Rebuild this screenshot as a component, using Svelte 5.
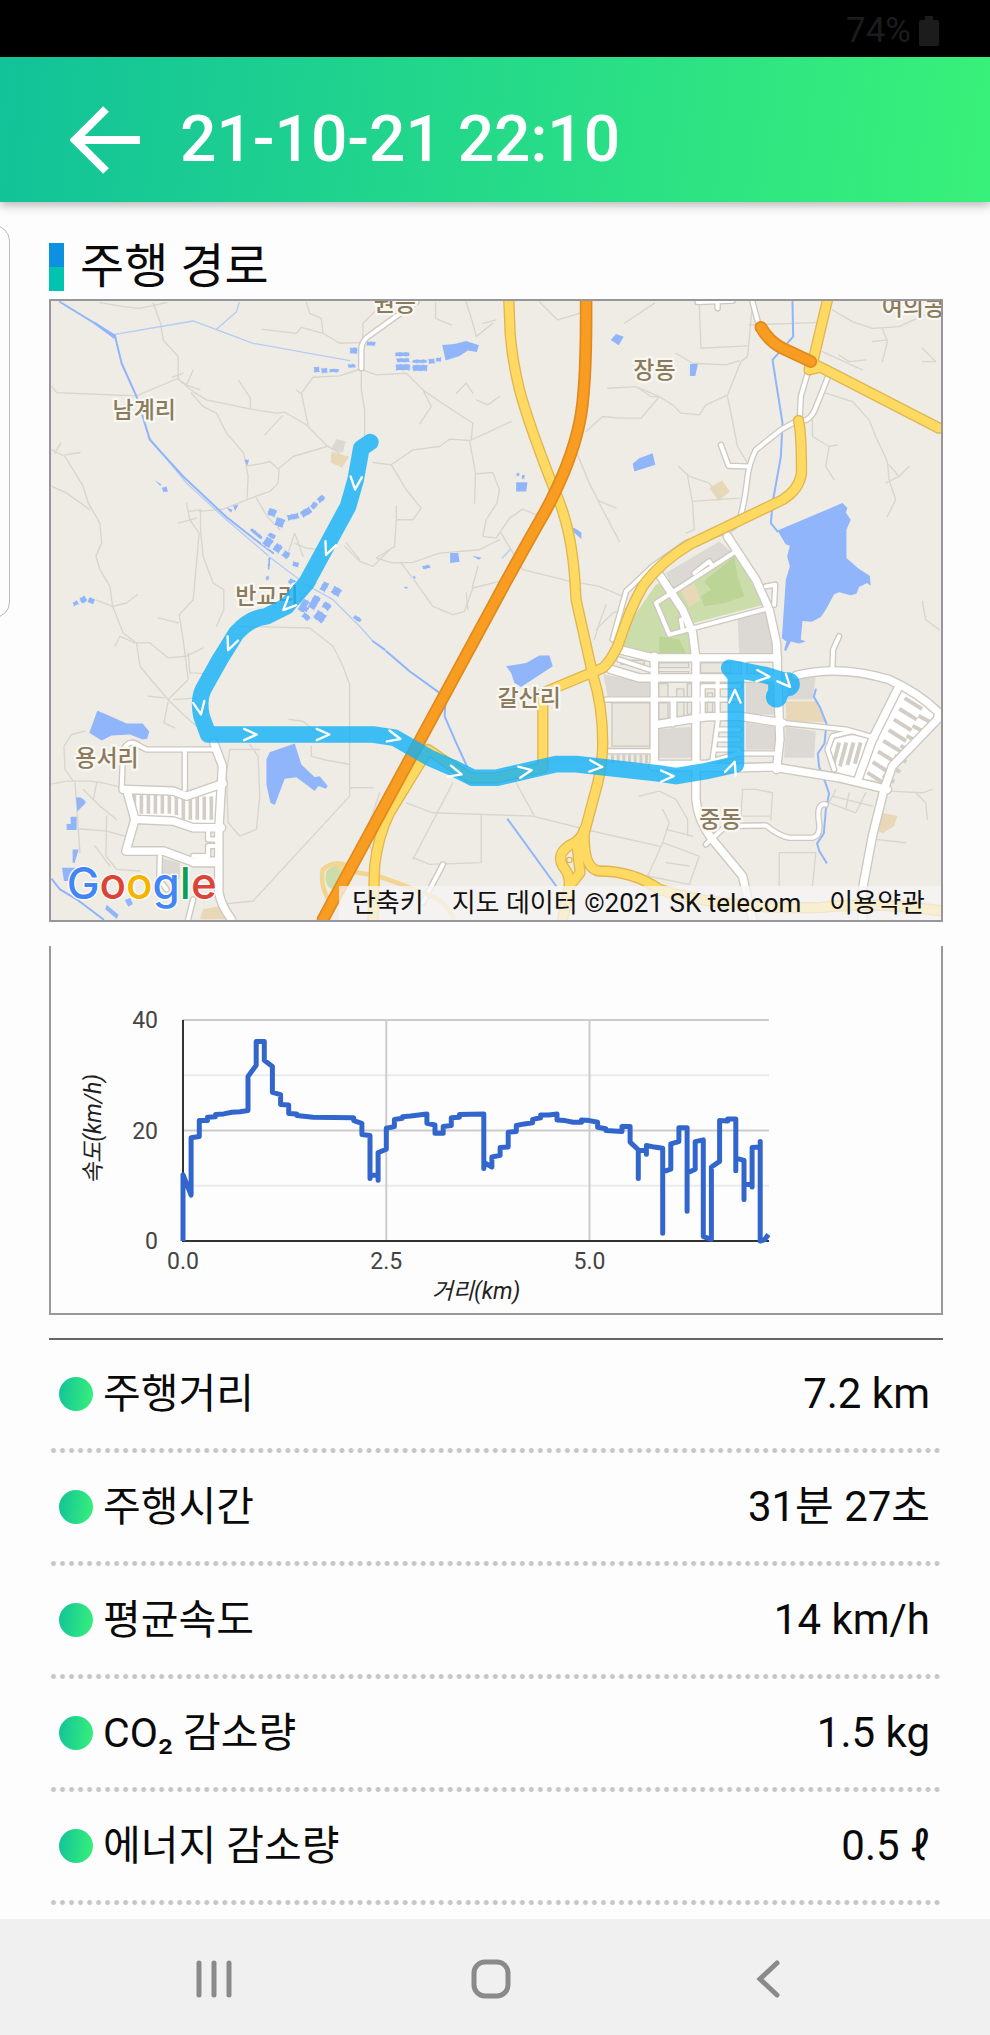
<script lang="ts">
  interface Stat {
    label: string;
    value: string;
  }

  const title = "21-10-21 22:10";

  const stats: Stat[] = [
    { label: "주행거리", value: "7.2 km" },
    { label: "주행시간", value: "31분 27초" },
    { label: "평균속도", value: "14 km/h" },
    { label: "CO₂ 감소량", value: "1.5 kg" },
    { label: "에너지 감소량", value: "0.5 ℓ" },
  ];

  // [distance km, speed km/h]
  const speedLog = [
    [0, 0], [0, 12], [0.1, 8.3], [0.1, 18.7], [0.2, 18.9], [0.2, 21.8], [0.3, 21.8],
    [0.3, 22.4], [0.4, 22.5], [0.4, 22.9], [0.5, 23], [0.6, 23.3], [0.7, 23.4], [0.8, 23.6],
    [0.8, 29.8], [0.9, 31.8], [0.9, 36.1], [1, 36.1], [1, 32.7], [1.1, 31.6], [1.1, 26.9],
    [1.2, 26.5], [1.2, 24.7], [1.3, 24.6], [1.3, 23.1], [1.4, 23], [1.4, 22.7], [1.6, 22.4],
    [2.1, 22.3], [2.1, 21.8], [2.2, 21.3], [2.2, 19.3], [2.3, 19.1], [2.3, 11.3], [2.3, 11.9],
    [2.4, 11.9], [2.4, 11], [2.4, 16], [2.5, 16.6], [2.5, 20.4], [2.6, 20.7], [2.6, 22],
    [2.7, 22.2], [2.7, 22.5], [2.8, 22.6], [2.9, 22.8], [3, 23], [3, 21.3], [3.1, 21],
    [3.1, 19.5], [3.2, 19.5], [3.2, 20.7], [3.3, 20.9], [3.3, 22.3], [3.4, 22.4], [3.4, 22.9],
    [3.7, 23], [3.7, 13.1], [3.7, 14.2], [3.8, 13.4], [3.8, 15.2], [3.9, 15.5], [3.9, 16.9],
    [4, 17], [4, 19.7], [4.1, 19.8], [4.1, 20.9], [4.2, 21.2], [4.3, 21.4], [4.3, 22],
    [4.4, 22.3], [4.4, 22.8], [4.5, 22.8], [4.6, 23], [4.6, 21.9], [4.7, 21.8], [4.8, 21.5],
    [4.9, 21.5], [4.9, 21.9], [5, 21.8], [5.1, 21.5], [5.1, 20.6], [5.2, 20.3], [5.2, 20],
    [5.4, 19.8], [5.4, 20.7], [5.5, 20.7], [5.5, 17.9], [5.6, 16.5], [5.6, 11.3], [5.6, 16.4],
    [5.7, 16.4], [5.7, 15.7], [5.7, 17.3], [5.8, 17], [5.9, 16.8], [5.9, 1.4], [5.9, 12.5],
    [6, 13], [6, 17.6], [6.1, 18], [6.1, 20.5], [6.2, 20.5], [6.2, 5.4], [6.2, 12.3],
    [6.3, 13], [6.3, 18], [6.4, 18.3], [6.4, 0.8], [6.5, 0.3], [6.5, 13.4], [6.6, 14.4],
    [6.6, 21.8], [6.7, 21.7], [6.7, 22.1], [6.8, 22.1], [6.8, 12.7], [6.8, 15], [6.9, 14.6],
    [6.9, 7.5], [6.9, 10.2], [7, 10.2], [7, 9.8], [7, 16.9], [7.1, 17], [7.1, 18], [7.1, 0],
    [7.15, 0.2], [7.2, 1.2],
  ];

  const plot = { left: 132, right: 718, top: 74, bottom: 295 };
  const xOf = (km: number) => plot.left + km * 81.3;
  const yOf = (speed: number) => plot.bottom - (speed * (plot.bottom - plot.top)) / 40;
  const speedLine = speedLog.map(([km, v]) => `${xOf(km).toFixed(1)},${yOf(v).toFixed(1)}`).join(" ");

  // map layers, drawn bottom up
  const water = [
    "M2410 640 2425 655 2420 668 2435 690 2422 720 2422 805 2460 838 2492 858 2495 888 2484 880 2460 892 2452 912 2435 917 2400 908 2385 914 2360 960 2345 982 2318 996 2290 994 2285 1050 2300 1056 2280 1062 2255 1056 2240 1086 2235 1080 2242 1056 2228 1046 2236 930 2240 870 2252 830 2244 800 2252 768 2240 764 2215 722Z",
    "M1400 1130 1460 1120 1500 1098 1530 1098 1540 1130 1445 1192 1425 1180 1415 1150Z",
    "M172 1264 200 1275 260 1302 308 1302 328 1326 322 1348 308 1350 270 1335 215 1338 185 1353 148 1330Z",
    "M690 1388 765 1362 785 1425 825 1463 840 1460 864 1490 858 1498 836 1490 825 1505 770 1463 735 1468 705 1547 692 1540 680 1485 680 1410Z",
    "M1208 165 1245 162 1280 153 1318 166 1312 186 1285 182 1260 198 1218 212Z",
    "M1780 522 1800 505 1840 490 1848 525 1785 545Z",
    "M1714 150 1730 132 1753 140 1738 166Z",
    "M1232 790h24l4 26-28 4Z",
    "M1430 577h34l-4 28h-30Z",
    "M1594 720l10-6 22 14v20Z",
    "M1952 222h24l-8 36h-16Z",
    "M108 1524q20-4 30 16l-26 26Z",
    "M92 1582h18v40h-30v-18h12Z",
    "M98 1680h18l-12 40h-6Z",
    "M66 1735h40v40h-34Z",
    "M200 1846l36 30-6 12-34-28Z",
    "M255 1832l16-6 8 18-14 8Z",
    "M165 95l62 42-4 10-62-46Z",
    "M366 594l14-4 4 16h-14Z",
    "M345 572l20 12-4 4Z",
    "M560 655l18 4-4 10ZM580 648l16-4-10 20Z",
    "M614 510h14l-6 18Z",
    "M1298 798l28 6-8 6Z",
  ];
  // fish ponds and paddies: x, y, w, h, angle
  const paddies = [
    [1066, 186, 44, 14, 0], [1070, 204, 40, 14, 0], [1068, 222, 44, 20, 0], [1118, 208, 44, 12, 0],
    [1118, 224, 46, 20, 0], [1166, 206, 20, 16, 0], [1188, 202, 18, 14, 0], [930, 172, 24, 20, 0],
    [980, 154, 28, 14, 0], [924, 222, 24, 12, 0], [822, 230, 18, 18, 0], [844, 234, 20, 16, 0],
    [868, 236, 30, 12, 0], [684, 656, 26, 24, 20], [706, 684, 28, 28, 20], [742, 672, 36, 18, -10],
    [782, 656, 34, 22, -30], [812, 638, 22, 18, -50], [832, 618, 24, 18, -40], [628, 726, 44, 12, 40],
    [672, 742, 26, 30, 35], [702, 762, 24, 26, 35], [728, 784, 22, 22, 35], [684, 730, 24, 16, 30],
    [758, 816, 20, 16, 20], [684, 800, 8, 40, 5], [678, 858, 10, 14, 0], [746, 868, 22, 18, 30],
    [780, 930, 30, 40, 30], [812, 916, 24, 44, 30], [844, 876, 20, 30, 30], [876, 892, 28, 26, 30],
    [824, 966, 34, 30, 35], [848, 938, 26, 22, 35], [786, 972, 26, 18, 40], [940, 980, 26, 14, 35],
    [98, 934, 18, 14, -25], [120, 920, 20, 20, -25], [144, 924, 20, 18, 30], [1430, 548, 10, 12, 0],
    [1446, 554, 10, 14, 0], [1148, 826, 24, 12, -10], [1120, 858, 8, 10, 0], [1094, 890, 10, 8, 0],
  ];
  const rivers = [
    "M60 36 225 137 245 220 290 320 330 450 430 560 560 682 640 745 700 790",
    "M1000 1055 1035 1080M1040 1085 1110 1145 1200 1210 1218 1230 1215 1280 1250 1360 1282 1430",
    "M1405 1590 1550 1790",
    "M2260 36 2262 140 2200 210 2230 400 2225 500 2200 640 2195 700 2215 725",
    "M2330 1200l-6 22 18 30 20 50-6 60-20 30 4 40 16 40 14 40-10 50-6 70-20 30 6 22 22 36",
    "M36 1770 60 1800 110 1830 190 1890",
  ];
  const streams = [
    "M225 133 460 93 640 160 930 212",
    "M530 118 590 65 598 38",
    "M790 880 880 930 960 1010 1000 1055",
    "M325 440 440 580 560 690 700 810 780 870",
    "M1388 805 1412 780",
  ];
  const lanes = [
    "M180 38 250 50 300 55 380 38M340 40 362 100 370 150 415 200 415 265 290 318",
    "M36 290 50 308 240 316 290 318M415 268 460 305 500 330 630 357 710 370 735 367 800 405 862 468 900 490",
    "M415 268 440 285 480 300M440 285 460 240M398 262 430 250M455 310 490 350 530 370 560 430 612 490 625 560 622 625",
    "M597 272 632 325 632 355M675 435 728 378M622 528 660 522 690 515 718 540 715 580 690 605 620 630 550 658 480 665",
    "M718 535 760 500 862 470M650 625 682 680 720 720M440 640 450 690 478 730 470 820 460 930",
    "M482 660 482 720 490 800 520 880 552 900 552 960 530 1010M415 700 470 685M445 665 482 660",
    "M668 118 770 130 785 112 850 130 900 160 960 158M800 38 810 70 845 85 850 130",
    "M805 405 785 310 820 262 900 258 960 238M770 300 788 315",
    "M36 480 75 500 130 590 145 640 180 700 185 760 168 800 180 840 210 890 218 950 250 1030 290 1060 300 1130 350 1190 385 1230 430 1275 470 1310",
    "M36 590 80 610 150 660M75 495 120 488M45 490 62 460M165 930 218 950 260 940 292 915",
    "M285 1060 240 1040 225 1070M290 1060 330 1060 385 1105 440 1100 490 1075M355 985 415 1000M460 930 418 975 430 1050 445 1170 385 1230",
    "M385 1235 372 1300 405 1315M325 1220 375 1225M400 1230 470 1225M445 1090 450 1150 500 1152",
    "M765 760 800 775 850 780M790 800 765 730 745 790M920 760 960 810M780 930 830 880",
    "M600 1010 810 1015 880 1070 910 1130 930 1185 930 1520 640 1835 540 1845M930 1495 1000 1495",
    "M748 1290 790 1295 830 1330M930 1425 850 1410 815 1400 815 1370",
    "M660 1380 640 1380 570 1380 560 1450 565 1600 600 1640 650 1620 660 1520 655 1400 630 1365",
    "M36 1483 80 1475 150 1475 190 1480 250 1495M135 1325 95 1335 72 1370 75 1440 100 1475M105 1475 120 1690M130 1500 180 1550 230 1590",
    "M115 1618 200 1625 255 1640M200 1580 198 1700 230 1740 300 1745M165 1670 210 1730M170 1480 160 1530",
    "M965 240 965 300 975 360 975 440M965 238 1010 255 1100 250 1150 300 1175 350 1140 402M1150 300 1200 335 1300 400 1295 450",
    "M1000 518 1055 525 1120 480 1200 470 1230 448 1290 452 1340 430 1415 395M1290 452 1308 550 1305 640",
    "M1310 552 1360 548 1380 600 1372 640 1340 690 1330 740 1370 745 1410 685 1450 658 1490 675 1530 635",
    "M1055 525 1100 600 1145 655 1120 690 1070 690 1070 650M1070 690 1065 770 1010 805 1060 820 1120 818 1200 790 1320 780 1380 750",
    "M915 770 960 815 1000 830 1050 780M1085 820 1130 880 1180 950 1240 975 1275 965 1300 895 1380 875M1385 730 1450 840 1580 872 1680 890 1750 920",
    "M1280 36 1300 100 1310 140 1360 100M1188 38 1188 85 1235 105M1330 100 1370 90",
    "M970 158 970 100 1010 60M1250 310 1280 280 1300 310M1310 330 1345 345 1380 320M1298 895 1315 830M1285 960 1280 910",
    "M1500 36 1555 90 1620 70M1755 100 1845 40M1705 295 1790 290 1835 320 1860 320 1805 385 1740 385 1690 380 1640 425",
    "M1610 485 1650 580 1690 660 1740 755M1675 632 1730 655M1860 320 1900 345 1925 370 1980 375 2000 345 2065 315 2105 215 2125 200 2140 40M2130 105 2330 98",
    "M1980 38 1985 175 2125 168M1910 190 1960 220 2060 225 2100 212M2065 320 2095 470 2125 520M1800 295 1860 320",
    "M1918 530 1950 560 2010 580 2040 620M1945 560 1960 640 1965 720 1940 730M1960 635 2100 625",
    "M2380 60 2440 95 2500 115 2580 110 2700 55M2530 115 2545 155 2530 215M2500 155 2545 150M2350 185 2470 240M2400 195 2430 215 2480 210",
    "M2360 310 2440 335 2490 390 2510 440 2545 515 2550 570 2570 630 2545 680M2550 525 2580 560 2540 580M2580 560 2610 530M2320 390 2320 440 2370 470 2360 530 2385 570M2370 470 2395 465",
    "M2650 175 2690 215 2650 215M2650 935 2660 990 2700 1020M1700 945 1680 1000 1665 1050M1780 950 1720 970 1670 1020",
    "M1100 1540 1180 1570 1480 1580 1680 1630 1860 1670M1240 1480 1120 1710M1325 1575 1325 1720 1170 1725 1120 1705M1430 1480 1485 1580",
    "M1020 1510 980 1630 1000 1700M1800 1520 1860 1505 1910 1530 1945 1590 1945 1640M1870 1560 1890 1600 1870 1660 1825 1760 1950 1785 1980 1700 1870 1660M1880 1620 1960 1640M1880 1720 1950 1730",
    "M2105 1590 2110 1500 2150 1500 2200 1510 2195 1590M2110 1580 2190 1580M2220 1690 2330 1690 2320 1790M2220 1690 2220 1790M2550 1505 2650 1510 2680 1500M2630 1510 2660 1540 2665 1590M2510 1650 2600 1660",
    "M2380 1520 2500 1550M2390 1500 2370 1540 2450 1570 2480 1510M2430 1510 2420 1560",
  ];
  const streets = [
    "M1130 36 985 140Q965 155 965 180V235",
    "M2140 36 2157 100M1975 36 2080 32M2035 36V55",
    "M2305 250 2285 320 2282 385M2367 260 2325 365Q2310 390 2295 392",
    "M2270 395 2225 420 2150 480Q2130 520 2125 560 2115 650 2100 690 2085 715 2060 725L1940 760 1840 830 1760 905 1720 1050",
    "M2045 465 2068 528 2130 530",
    "M2090 785 1850 940 1890 1035 2190 955M1965 850 2010 815 2020 830M1925 990 1930 1020",
    "M2180 890 2208 885 2205 945",
    "M2400 1040 2382 1080 2380 1130",
    "M2000 1665 2060 1610 2180 1608Q2220 1640 2250 1645H2320Q2345 1640 2340 1600 2330 1540 2360 1545",
    "M245 1500 250 1380Q270 1345 300 1370L320 1380H530M435 1380V1500",
    "M360 1700 358 1770 380 1800M460 1830 445 1890M505 1615V1650H535M535 1670H505V1700H460M460 1725H535",
    "M1210 1725 1150 1840",
    "M1700 1230H2100M1710 1385H1850M1845 1230H1900V1305M1905 1300V1230M2035 1165V1300L2020 1410M1990 1280V1190H2100",
    "M1845 1420H2000L2100 1392H2220M2115 1105V1165M1740 1110 1830 1140M2035 1320H2100M2030 1350H2100M2025 1380H2100",
    "M2230 1300 2420 1320 2510 1345M2440 1325 2380 1340 2365 1380 2385 1440",
  ];
  const avenues = [
    "M250 1500 400 1505 440 1520 550 1482M260 1500 285 1590 258 1685 370 1685 460 1718 535 1715M285 1590 400 1595 460 1615H545",
    "M522 1360 548 1430 537 1620V1810Q545 1850 575 1890",
    "M2065 740 2150 870 2190 960 2212 1060 2215 1150 2222 1350 2212 1440",
    "M1860 855 1930 960 1960 1030 1970 1110V1530Q1975 1590 2015 1645L2110 1760 2140 1890",
    "M1740 1080 1840 1105H2215M1715 1140 1800 1165H2215M1845 1100V1420",
    "M1850 1305 2000 1282 2100 1280 2230 1300",
    "M1840 1430 2100 1435 2200 1432 2400 1465 2545 1500",
    "M2270 1158Q2400 1125 2550 1170 2640 1210 2700 1270L2695 1290 2560 1430 2535 1500 2500 1640 2470 1800V1890",
    "M2580 1190 2500 1350 2455 1475",
  ];
  const highways = [
    "M1408 30 1412 130Q1418 210 1440 300 1470 410 1545 600 1600 720 1608 900L1610 930 1660 1155Q1690 1250 1690 1360 1690 1420 1675 1480L1635 1630",
    "M1635 1620Q1625 1655 1590 1668 1550 1695 1570 1730 1600 1765 1585 1810L1570 1890M1635 1620Q1630 1740 1680 1745 1780 1745 1860 1800",
    "M1612 1660 1622 1750 1590 1790",
    "M2365 30 2320 220 2360 240 2700 415M2315 215 2310 240 2340 232",
    "M2278 392Q2287 430 2287 550 2280 600 2230 630L1950 765Q1860 820 1810 890 1770 960 1735 1070 1710 1120 1690 1135L1510 1210V1430",
    "M1165 1380 1290 1465 1370 1465 1510 1435M1160 1390 1050 1570Q1015 1640 1005 1730L1000 1890",
    "M1860 1800Q2050 1860 2340 1855 2500 1835 2710 1865",
  ];
  const expressways = [
    "M1640 30Q1642 300 1620 400 1595 520 1520 660 1440 800 1370 930L850 1890",
    "M2165 112Q2190 155 2230 175L2315 215",
  ];

  // rows of houses inside the street blocks
  const houses = [
    ...Array.from({ length: 12 }, (_, i) => [278 + i * 21, 1517 + (i > 5 ? 4 : 0), 11, 56 + (i > 6 ? 14 : 0), 0]),
    ...Array.from({ length: 7 }, (_, i) => [1715 + i * 17, 1395, 9, 26, 0]),
    ...Array.from({ length: 5 }, (_, i) => [2384 + i * 22, 1358, 12, 78 - i * 4, 15]),
    ...Array.from({ length: 8 }, (_, i) => [2592 - i * 16, 1236 + i * 32, 62, 12, 32]),
    ...Array.from({ length: 7 }, (_, i) => [2650 - i * 18, 1268 + i * 30, 12, 40, -62]),
  ];
  const blocks = [
    [1858, 1120, 90, 14], [1858, 1146, 90, 8], [1745, 1112, 70, 12], [1858, 1182, 28, 42],
    [1912, 1198, 22, 92], [1858, 1240, 28, 50], [1944, 1182, 14, 92], [2004, 1210, 16, 62],
    [1718, 1240, 114, 130], [1984, 1120, 90, 30],
  ];

  // heading arrows: x, y, angle
  const arrows = [
    [948, 580, 95], [866, 778, 112], [744, 948, 135], [572, 1064, 112], [480, 1256, 80],
    [632, 1335, 0], [850, 1335, 0], [1064, 1344, 14], [1248, 1450, 15], [1458, 1445, -10],
    [1670, 1431, 5], [1884, 1460, 0], [2080, 1435, -70], [2087, 1220, -90], [2172, 1160, 5],
    [2240, 1178, 48],
  ];

  const places = [
    { name: "남계리", x: 218, y: 385 },
    { name: "원등", x: 1002, y: 62 },
    { name: "장동", x: 1782, y: 264 },
    { name: "여의콩", x: 2528, y: 74 },
    { name: "반교리", x: 586, y: 942 },
    { name: "용서리", x: 106, y: 1430 },
    { name: "갈산리", x: 1374, y: 1250 },
    { name: "중동", x: 1980, y: 1612 },
  ];
</script>

<div class="screen">
  <div class="status-bar">
    <span>74%</span>
    <svg width="20" height="30" viewBox="0 0 20 30" aria-hidden="true">
      <path d="M6 0h8v4h4q2 0 2 2v22q0 2-2 2H2q-2 0-2-2V6q0-2 2-2h4Z" />
    </svg>
  </div>

  <header>
    <button class="back" aria-label="뒤로">
      <svg width="70" height="68" viewBox="0 0 70 68">
        <path d="M36 3 5 34l31 31M5 34h65" />
      </svg>
    </button>
    <h1>{title}</h1>
  </header>

  <div class="drawer-edge"></div>

  <main>
    <h2>주행 경로</h2>

    <section class="map">
      <svg viewBox="33 33 2673 1860" role="img" aria-label="주행 경로 지도">
        <rect class="land" x="0" y="0" width="2750" height="1950" />

        <path class="park" d="M2090 790 2172 945 1962 1000 1970 1092H1840L1745 1068 1780 985 1850 885Z" />
        <path class="park-dark" d="M2025 850l60-50 10 60 20 60-60 20-60 10-10-30 30-20-20-25ZM1860 1040l60 10 20 40h-80Z" />
        <path class="town" d="M1880 850 2040 755 2075 785 1900 895ZM2095 985 2195 960 2205 1095H2100ZM2120 1180H2205V1275H2120ZM2120 1300 2210 1312V1380H2120ZM2240 1312 2330 1325 2325 1405H2235ZM1855 1320 1955 1312V1405H1855ZM1692 1155 1830 1180V1220H1705ZM2250 1160H2330L2320 1230H2240Z" />
        <path class="town" d="M890 448l28 6-8 34-36-10ZM360 1705l60 15v50h-55Z" />
        <path class="yard" d="M2240 1235H2335L2358 1298 2240 1295ZM875 485l54 16-22 32-34-14ZM2530 1570l45 10-10 30-35 22-16-10ZM2010 595l38-24 24 34-34 28ZM1925 900l40-20 18 50-34 22ZM490 1860l50-10 20 40h-80Z" />

        {#each lanes as d}
          <path class="lane" {d} />
        {/each}
        {#each streams as d}
          <path class="stream" {d} />
        {/each}
        {#each rivers as d}
          <path class="river" {d} />
        {/each}
        {#each water as d}
          <path class="water" {d} />
        {/each}
        {#each paddies as [x, y, w, h, a]}
          <rect class="paddy" {x} {y} width={w} height={h} transform="rotate({a} {x + w / 2} {y + h / 2})" />
        {/each}

        {#each blocks as [x, y, w, h]}
          <rect class="block" {x} {y} width={w} height={h} />
        {/each}
        <path class="estate" d="M262 1505 400 1510 530 1500V1615L400 1600 290 1590ZM2590 1200 2695 1275 2540 1470 2470 1470 2500 1350ZM2385 1335 2510 1345 2455 1470 2390 1445 2370 1380Z" />
        {#each houses as [x, y, w, h, a]}
          <rect class="house" {x} {y} width={w} height={h} transform="rotate({a} {x + w / 2} {y + h / 2})" />
        {/each}

        {#each streets as d}
          <path class="street-edge" {d} />
        {/each}
        {#each avenues as d}
          <path class="avenue-edge" {d} />
        {/each}
        {#each streets as d}
          <path class="street" {d} />
        {/each}
        {#each avenues as d}
          <path class="avenue" {d} />
        {/each}

        <path class="park" d="M860 1745q30-30 60-5l-40 60q-30-10-20-55Z" />
        <path class="ramp" d="M925 1730q-40-20-75 10-10 40 15 90v60M900 1735q60 20 100 20 90 30 160 60 60 20 80 70" />
        {#each highways as d}
          <path class="highway-edge" {d} />
        {/each}
        {#each highways as d}
          <path class="highway" {d} />
        {/each}
        <circle class="island" cx="1590" cy="1712" r="8" />
        {#each expressways as d}
          <path class="expressway-edge" {d} />
          <path class="expressway" {d} />
        {/each}

        {#each places as p}
          <text class="place" x={p.x} y={p.y}>{p.name}</text>
        {/each}

        <g class="route">
          <path d="M992 457 965 475 948 570 925 650 860 770 800 880 740 950 680 980Q630 985 590 1030L540 1110 490 1200Q475 1230 485 1280L505 1335H1000L1065 1345 1170 1405 1240 1435 1300 1465H1370L1480 1440 1550 1424H1610L1860 1452 1910 1460 2000 1445 2090 1425V1160L2070 1135 2120 1145 2180 1157 2250 1178 2212 1225V1170" />
          <circle cx="2212" cy="1222" r="32" />
          <circle cx="2246" cy="1184" r="36" />
        </g>
        {#each arrows as [x, y, a]}
          <path class="arrow" d="M-19-17 19 0-19 17" transform="translate({x} {y}) rotate({a})" />
        {/each}

        <text class="logo" x="80" y="1830">
          <tspan fill="#4285f4">G</tspan><tspan fill="#db4437">o</tspan><tspan fill="#f4b400">o</tspan><tspan fill="#4285f4">g</tspan><tspan fill="#0f9d58">l</tspan><tspan fill="#db4437">e</tspan>
        </text>
      </svg>
      <div class="legal">
        <button>단축키</button>
        <span>지도 데이터 ©2021 SK telecom</span>
        <a href="#terms">이용약관</a>
      </div>
    </section>

    <section class="chart">
      <svg viewBox="0 0 890 367" role="img" aria-label="거리별 속도">
        {#each [10, 30] as v}
          <line class="grid-minor" x1={plot.left} x2={plot.right} y1={yOf(v)} y2={yOf(v)} />
        {/each}
        {#each [20, 40] as v}
          <line class="grid" x1={plot.left} x2={plot.right} y1={yOf(v)} y2={yOf(v)} />
        {/each}
        {#each [2.5, 5] as km}
          <line class="grid" x1={xOf(km)} x2={xOf(km)} y1={plot.top} y2={plot.bottom} />
        {/each}
        <path class="axis" d="M{plot.left} {plot.top}V{plot.bottom}H{plot.right}" />
        <polyline class="speed" points={speedLine} />

        {#each [0, 20, 40] as v}
          <text class="tick" text-anchor="end" x="107" y={yOf(v) + 8}>{v}</text>
        {/each}
        {#each [0, 2.5, 5] as km}
          <text class="tick" text-anchor="middle" x={xOf(km)} y="323">{km.toFixed(1)}</text>
        {/each}
        <text class="axis-title" text-anchor="middle" x="425" y="353">거리(km)</text>
        <text class="axis-title" text-anchor="middle" transform="translate(50 183) rotate(-90)">속도(km/h)</text>
      </svg>
    </section>

    <dl>
      {#each stats as stat (stat.label)}
        <div class="row">
          <dt>{stat.label}</dt>
          <dd>{stat.value}</dd>
        </div>
      {/each}
    </dl>
  </main>

  <nav>
    <button aria-label="최근 앱">
      <svg width="40" height="40" viewBox="0 0 40 40">
        <path d="M5 4v32M20 4v32M35 4v32" />
      </svg>
    </button>
    <button aria-label="홈">
      <svg width="40" height="40" viewBox="0 0 40 40">
        <rect x="3" y="3" width="34" height="34" rx="11" />
      </svg>
    </button>
    <button aria-label="이전">
      <svg width="40" height="40" viewBox="0 0 40 40">
        <path d="M29 4 12 20l17 16" />
      </svg>
    </button>
  </nav>
</div>

<style>
  :global(body) {
    margin: 0;
    background: #fdfdfd;
  }

  .screen {
    position: relative;
    display: flex;
    flex-direction: column;
    min-height: 100vh;
    overflow: hidden;
    font-family: Roboto, "Noto Sans CJK KR", sans-serif;
    color: #0a0a0a;
  }

  button {
    padding: 0;
    border: 0;
    background: none;
    font: inherit;
    color: inherit;
    cursor: pointer;
  }

  svg {
    display: block;
  }

  .status-bar {
    display: flex;
    align-items: center;
    justify-content: flex-end;
    gap: 8px;
    height: 57px;
    box-sizing: border-box;
    padding: 4px 51px 0 0;
    background: #000;
    color: #1c1c1c;
    font-size: 35px;
  }
  .status-bar svg {
    fill: #1c1c1c;
  }

  header {
    display: flex;
    align-items: center;
    gap: 40px;
    height: 145px;
    box-sizing: border-box;
    padding: 20px 70px 0;
    background: linear-gradient(97deg, #12c299, #38f179);
    box-shadow: 0 3px 10px rgba(0, 0, 0, 0.3);
    color: #fff;
  }
  header h1 {
    margin: 0;
    font-size: 64px;
    line-height: 72px;
    font-weight: 500;
  }
  .back path {
    fill: none;
    stroke: #fff;
    stroke-width: 8;
  }

  /* side panel peeking in from the left */
  .drawer-edge {
    position: absolute;
    left: -30px;
    top: 225px;
    width: 38px;
    height: 391px;
    border: 1px solid #bbb;
    border-radius: 16px;
  }

  main {
    flex: 1;
    padding: 41px 47px 0 49px;
  }

  h2 {
    display: flex;
    align-items: center;
    gap: 16px;
    margin: 0 0 8px;
    font-size: 48px;
    line-height: 48px;
    font-weight: 400;
  }
  h2::before {
    content: "";
    width: 15px;
    height: 48px;
    background: linear-gradient(#0c91e0 50%, #00c4b0 50%);
  }

  .map {
    position: relative;
    border: 2px solid #98969a;
  }
  .map svg {
    width: 100%;
    stroke-linecap: round;
    stroke-linejoin: round;
  }
  .map path {
    fill: none;
  }
  .land {
    fill: #eeece4;
  }
  .map .park {
    fill: #cbddaa;
  }
  .map .park-dark {
    fill: #bcd496;
  }
  .map .town {
    fill: #dcd8d3;
  }
  .map .yard {
    fill: #e8d8b8;
  }
  .map .water,
  .paddy {
    fill: #90b5fb;
  }
  .paddy {
    stroke: #eeece4;
    stroke-width: 3;
    stroke-dasharray: 12 6;
  }
  .lane {
    stroke: #d8d5ce;
    stroke-width: 4;
  }
  .river {
    stroke: #90b5fb;
    stroke-width: 6;
  }
  .stream {
    stroke: #b4ccf5;
    stroke-width: 4;
  }
  .map .estate {
    fill: #fff;
  }
  .block {
    fill: #e9e6de;
    stroke: #cdc8c0;
    stroke-width: 4;
  }
  .house {
    fill: #d2cec5;
  }
  .street-edge {
    stroke: #cdc8c0;
    stroke-width: 20;
  }
  .street {
    stroke: #fff;
    stroke-width: 12;
  }
  .avenue-edge {
    stroke: #cdc8c0;
    stroke-width: 30;
  }
  .avenue {
    stroke: #fff;
    stroke-width: 22;
  }
  .ramp {
    stroke: #f3d592;
    stroke-width: 14;
  }
  .highway-edge {
    stroke: #dfb652;
    stroke-width: 34;
  }
  .highway {
    stroke: #ffda62;
    stroke-width: 26;
  }
  .island {
    fill: #eeece4;
    stroke: #dfb652;
    stroke-width: 4;
  }
  .expressway-edge {
    stroke: #e08a1c;
    stroke-width: 38;
  }
  .expressway {
    stroke: #f99c22;
    stroke-width: 28;
  }
  .place {
    font-family: "Noto Sans CJK KR", sans-serif;
    font-size: 69px;
    font-weight: 500;
    fill: #8b7b5d;
    stroke: #f8f7f2;
    stroke-width: 14;
    paint-order: stroke;
  }
  .route {
    opacity: 0.8;
  }
  .route path {
    stroke: #12b0f8;
    stroke-width: 50;
  }
  .route circle {
    fill: #12b0f8;
  }
  .arrow {
    stroke: #fff;
    stroke-width: 7;
  }
  .logo {
    font-family: Inter, sans-serif;
    font-size: 132px;
    font-weight: 500;
    stroke: #fff;
    stroke-width: 8;
    paint-order: stroke;
  }

  .legal {
    position: absolute;
    right: 0;
    bottom: 0;
    display: flex;
    gap: 28px;
    padding: 0 16px 0 13px;
    background: rgba(245, 245, 245, 0.75);
    color: #111;
    font-size: 26px;
    line-height: 34px;
    white-space: nowrap;
  }
  .legal a {
    color: inherit;
    text-decoration: none;
  }

  .chart {
    margin-top: 24px;
    border: solid #999;
    border-width: 0 2px 2px;
  }
  .chart svg {
    width: 100%;
  }
  .grid {
    stroke: #ccc;
    stroke-width: 2;
  }
  .grid-minor {
    stroke: #ebebeb;
    stroke-width: 2;
  }
  .axis {
    fill: none;
    stroke: #333;
    stroke-width: 2;
  }
  .speed {
    fill: none;
    stroke: #3366cc;
    stroke-width: 5;
    stroke-linejoin: round;
  }
  .tick {
    font-size: 23px;
    fill: #444;
  }
  .axis-title {
    font-size: 23px;
    font-style: italic;
    fill: #222;
  }

  dl {
    margin: 23px 0 0;
    border-top: 2px solid #666;
  }
  .row {
    display: flex;
    align-items: center;
    justify-content: space-between;
    height: 113px;
    box-sizing: border-box;
    padding: 0 13px 6px 10px;
    background: radial-gradient(circle, #c6c6c6 2px, transparent 3px) left bottom / 9px 5px round no-repeat;
  }
  dt {
    display: flex;
    align-items: center;
    gap: 10px;
    font-size: 41px;
    line-height: 48px;
  }
  dt::before {
    content: "";
    width: 34px;
    height: 34px;
    border-radius: 50%;
    background: linear-gradient(97deg, #12c299, #38f179);
  }
  dd {
    margin: 0;
    font-size: 42px;
    line-height: 48px;
  }

  nav {
    display: grid;
    grid-template-columns: repeat(3, 1fr);
    height: 116px;
    box-sizing: border-box;
    padding: 4px 84px 0 75px;
    background: #f0f0f0;
  }
  nav button {
    display: grid;
    place-items: center;
  }
  nav svg {
    fill: none;
    stroke: #8a8a8a;
    stroke-width: 5;
    stroke-linecap: round;
  }
</style>
